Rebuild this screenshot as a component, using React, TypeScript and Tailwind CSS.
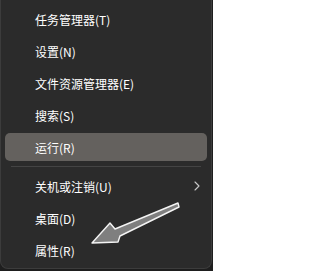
import React from "react";

interface MenuItem {
  label: string;
  active?: boolean;
  submenu?: boolean;
}

const topItems: MenuItem[] = [
  { label: "任务管理器(T)" },
  { label: "设置(N)" },
  { label: "文件资源管理器(E)" },
  { label: "搜索(S)" },
  { label: "运行(R)", active: true },
];

const bottomItems: MenuItem[] = [
  { label: "关机或注销(U)", submenu: true },
  { label: "桌面(D)" },
  { label: "属性(R)" },
];

function Row({ item, first }: { item: MenuItem; first?: boolean }) {
  return (
    <div
      className={`flex h-[28px] items-center rounded-[5px] pl-[30px] pr-[7px] ${
        first ? "" : "mt-[4px]"
      } ${item.active ? "bg-[#64615e]" : ""}`}
    >
      <span className="flex-1 pt-px text-[12px] leading-none text-white">
        {item.label}
      </span>
      {item.submenu && (
        <svg width="6" height="10" viewBox="0 0 6 10" fill="none">
          <path
            d="M1 1l4 4-4 4"
            stroke="#c8c8c8"
            strokeWidth="1.1"
            strokeLinecap="round"
            strokeLinejoin="round"
          />
        </svg>
      )}
    </div>
  );
}

export default function App() {
  return (
    <div
      className="relative h-[271px] w-[213px] overflow-hidden bg-[#1e1e1e]"
      style={{ fontFamily: '"Noto Sans CJK SC", "Noto Sans", sans-serif' }}
    >
      <div className="h-[269px] w-[212px] rounded-b-[8px] border border-t-0 border-[#3c3c3c] bg-[#2b2b2b] px-[4px] pt-[5px]">
        {topItems.map((item, i) => (
          <Row key={item.label} item={item} first={i === 0} />
        ))}
        <div className="mx-[6px] mt-[5px] h-px bg-[#444444]" />
        <div className="mt-[5px]">
          {bottomItems.map((item, i) => (
            <Row key={item.label} item={item} first={i === 0} />
          ))}
        </div>
      </div>

      {/* annotation arrow drawn over the menu */}
      <svg
        className="pointer-events-none absolute inset-0"
        width="213"
        height="271"
        viewBox="0 0 213 271"
      >
        <polygon
          points="92,243 110,223 115,229 178,203 179,207 120,236 118,242"
          fill="#7f7f7f"
          stroke="#f4f4f4"
          strokeWidth="1.4"
          strokeLinejoin="round"
        />
      </svg>
    </div>
  );
}
